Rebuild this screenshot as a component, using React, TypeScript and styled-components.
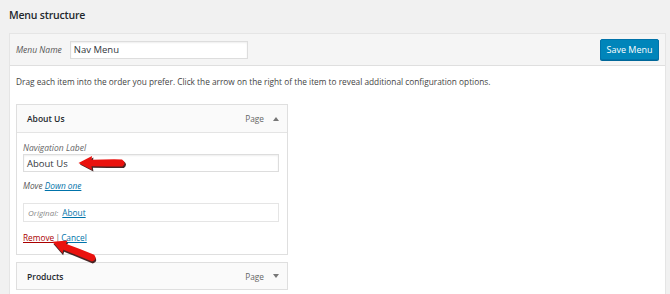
import React from "react";
import styled, { createGlobalStyle } from "styled-components";

const Global = createGlobalStyle`
  html, body { margin: 0; padding: 0; }
  body {
    background: #f1f1f1;
    font-family: "Open Sans", "Noto Sans", sans-serif;
    color: #444;
    width: 670px;
    height: 294px;
    overflow: hidden;
  }
`;

const Page = styled.div`
  padding: 8px 4px 0 9px;
  position: relative;
  height: 294px;
  box-sizing: border-box;
  overflow: hidden;
`;

const Title = styled.h3`
  margin: 0 0 10px 0;
  font-size: 10.5px;
  letter-spacing: -0.2px;
  font-weight: 600;
  color: #23282d;
  line-height: 15px;
`;

const Panel = styled.div`
  border: 1px solid #e5e5e5;
  border-bottom: none;
  background: #fff;
  height: 261px;
  box-sizing: border-box;
`;

const PanelHeader = styled.div`
  display: flex;
  align-items: center;
  justify-content: space-between;
  height: 31px;
  padding: 0 6px;
  background: #f5f5f5;
  border-bottom: 1px solid #dfdfdf;
`;

const NameGroup = styled.div`
  display: flex;
  align-items: center;
  gap: 8px;
`;

const FieldLabel = styled.span`
  font-style: italic;
  font-size: 8.5px;
  color: #555;
`;

const TextBox = styled.div<{ $w?: number }>`
  box-sizing: border-box;
  width: ${(p) => (p.$w ? `${p.$w}px` : "100%")};
  height: 18px;
  border: 1px solid #ddd;
  box-shadow: inset 0 1px 2px rgba(0, 0, 0, 0.07);
  background: #fff;
  display: flex;
  align-items: center;
  padding: 0 3px;
  font-size: 9.5px;
  color: #32373c;
`;

const SaveButton = styled.button`
  box-sizing: border-box;
  width: 59px;
  height: 21px;
  background: #0085ba;
  border: 1px solid #0073aa;
  border-radius: 2px;
  box-shadow: 0 1px 0 #006799;
  color: #fff;
  font-family: inherit;
  font-size: 9px;
  padding: 0;
`;

const Body = styled.div`
  padding: 0 6px;
`;

const Description = styled.p`
  margin: 0;
  padding: 10px 0 0 0;
  height: 38px;
  font-size: 8.3px;
  line-height: 12px;
  color: #444;
  box-sizing: border-box;
`;

const Item = styled.div<{ $gap?: number }>`
  box-sizing: border-box;
  width: 272px;
  border: 1px solid #dfdfdf;
  background: #fff;
  margin-top: ${(p) => p.$gap ?? 0}px;
`;

const ItemHeader = styled.div<{ $open?: boolean }>`
  display: flex;
  align-items: center;
  height: ${(p) => (p.$open ? 27 : 26)}px;
  padding: 0 8px 0 10px;
  background: #fafafa;
  border-bottom: ${(p) => (p.$open ? "1px solid #e4e4e4" : "none")};
`;

const ItemTitle = styled.span`
  flex: 1;
  font-size: 8.5px;
  font-weight: 600;
  color: #23282d;
`;

const ItemType = styled.span`
  font-size: 8.3px;
  color: #666;
  margin-right: 9px;
`;

const Caret = styled.svg`
  width: 6px;
  height: 4px;
  fill: #777;
`;

const ItemBody = styled.div`
  padding: 10px 8px 11px 6px;
`;

const SmallLabel = styled.div`
  font-style: italic;
  font-size: 8.5px;
  color: #666;
  line-height: 10px;
  margin-bottom: 1px;
`;

const MoveRow = styled.div`
  font-size: 8.3px;
  color: #555;
  margin: 8px 0 12px 0;
  line-height: 11px;
  font-style: italic;
`;

const Link = styled.a<{ $danger?: boolean }>`
  color: ${(p) => (p.$danger ? "#a00" : "#0073aa")};
  text-decoration: underline;
  cursor: pointer;
`;

const OriginalBox = styled.div`
  box-sizing: border-box;
  height: 19px;
  border: 1px solid #e5e5e5;
  display: flex;
  align-items: center;
  padding: 0 4px;
  font-size: 8px;
  color: #888;
  gap: 4px;
`;

const OrigLabel = styled.span`
  font-style: italic;
`;

const OrigLink = styled(Link)`
  font-size: 8.3px;
`;

const Actions = styled.div`
  margin-top: 10px;
  font-size: 8.3px;
  line-height: 11px;
  color: #666;
  word-spacing: -1px;
`;

const Arrow = styled.svg<{ $x: number; $y: number; $r: number }>`
  position: absolute;
  left: ${(p) => p.$x}px;
  top: ${(p) => p.$y}px;
  width: 52px;
  height: 20px;
  overflow: visible;
  transform: rotate(${(p) => p.$r}deg);
  transform-origin: 3px 10px;
`;

const arrowPath =
  "M2.5 10 L16 3 L15.5 6.8 Q30 6.2 46 6.4 Q51 9.6 46.5 13.4 Q30 13.4 15.5 13.2 L16 17 Z";

const ArrowShape = () => (
  <>
    <path d={arrowPath} fill="#2a0000" transform="translate(1.4 1.6)" opacity="0.85" />
    <path d={arrowPath} fill="#ea120e" />
  </>
);

export default function App() {
  return (
    <>
      <Global />
      <Page>
        <Title>Menu structure</Title>
        <Panel>
          <PanelHeader>
            <NameGroup>
              <FieldLabel>Menu Name</FieldLabel>
              <TextBox $w={178}>Nav Menu</TextBox>
            </NameGroup>
            <SaveButton>Save Menu</SaveButton>
          </PanelHeader>
          <Body>
            <Description>
              Drag each item into the order you prefer. Click the arrow on the
              right of the item to reveal additional configuration options.
            </Description>
            <Item>
              <ItemHeader $open>
                <ItemTitle>About Us</ItemTitle>
                <ItemType>Page</ItemType>
                <Caret viewBox="0 0 6 4">
                  <path d="M0 4 L3 0 L6 4 Z" />
                </Caret>
              </ItemHeader>
              <ItemBody>
                <SmallLabel>Navigation Label</SmallLabel>
                <TextBox>About Us</TextBox>
                <MoveRow>
                  Move <Link>Down one</Link>
                </MoveRow>
                <OriginalBox>
                  <OrigLabel>Original:</OrigLabel>
                  <OrigLink>About</OrigLink>
                </OriginalBox>
                <Actions>
                  <Link $danger>Remove</Link> | <Link>Cancel</Link>
                </Actions>
              </ItemBody>
            </Item>
            <Item $gap={7}>
              <ItemHeader>
                <ItemTitle>Products</ItemTitle>
                <ItemType>Page</ItemType>
                <Caret viewBox="0 0 6 4">
                  <path d="M0 0 L6 0 L3 4 Z" />
                </Caret>
              </ItemHeader>
            </Item>
          </Body>
        </Panel>
        <Arrow $x={76} $y={153} $r={0} viewBox="0 0 52 20">
          <ArrowShape />
        </Arrow>
        <Arrow $x={50} $y={232} $r={22} viewBox="0 0 52 20">
          <ArrowShape />
        </Arrow>
      </Page>
    </>
  );
}
